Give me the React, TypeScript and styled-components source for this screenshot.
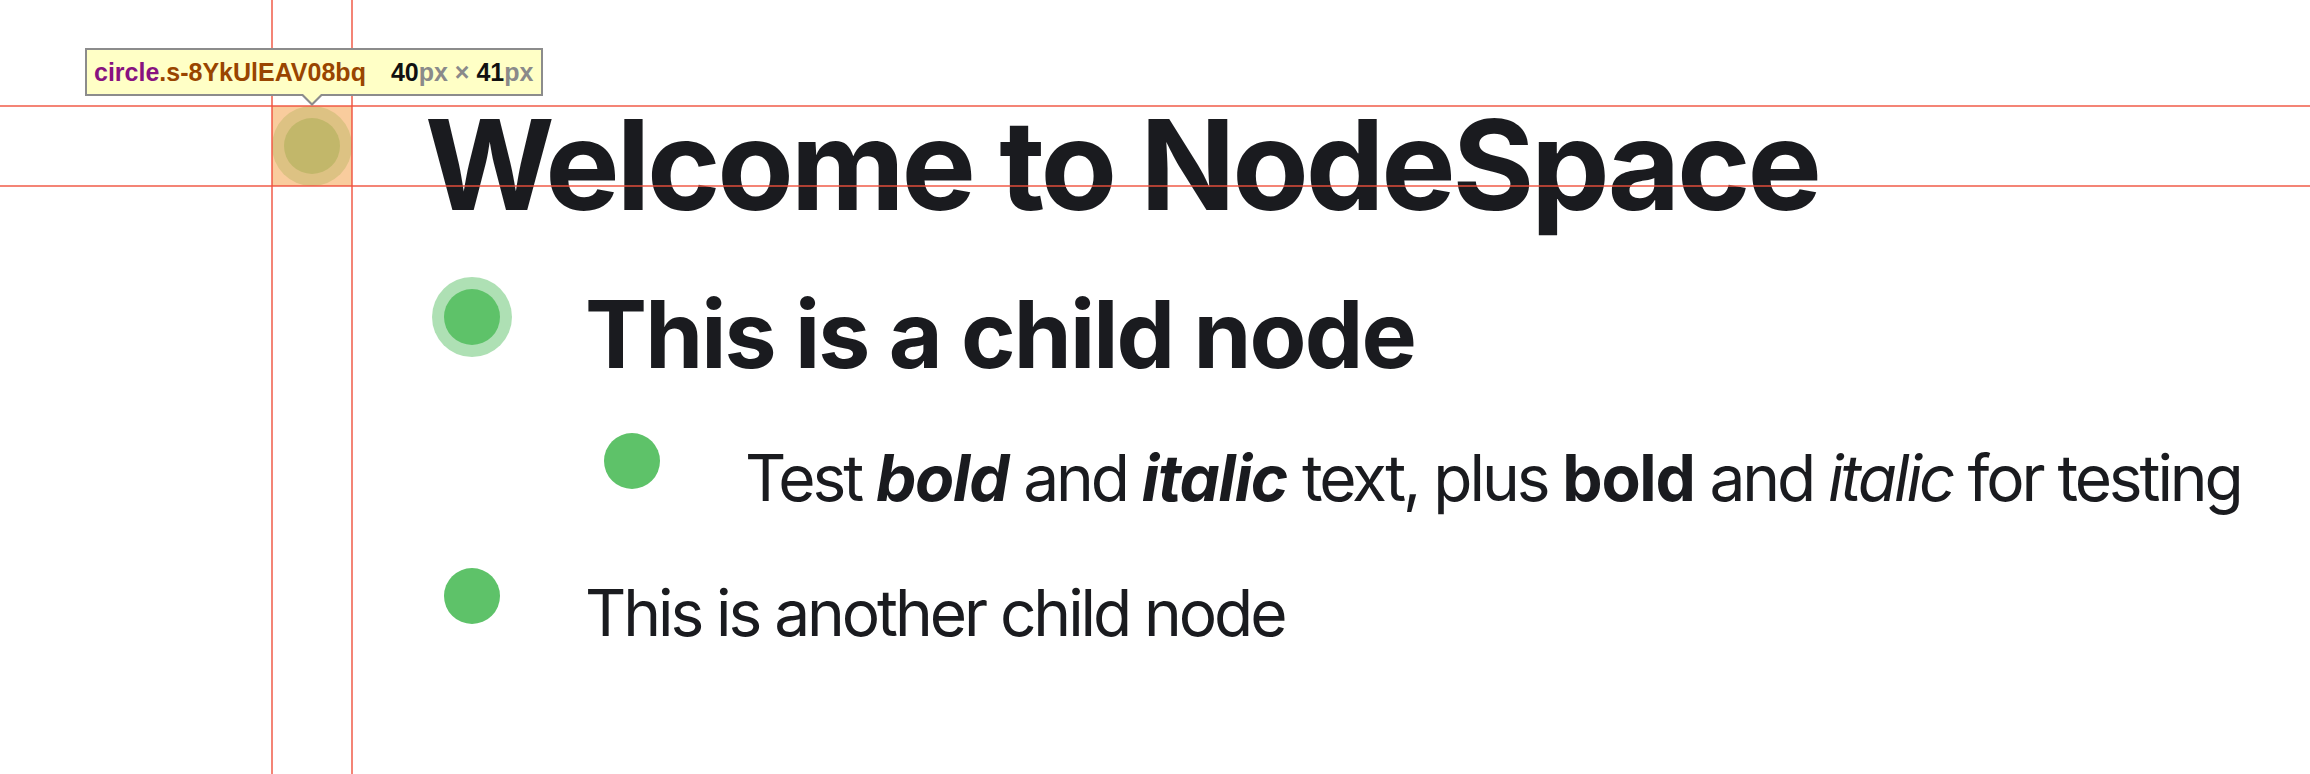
import React from "react";
import styled, { createGlobalStyle } from "styled-components";

const GlobalStyle = createGlobalStyle`
  html, body {
    margin: 0;
    padding: 0;
    background: #ffffff;
  }
  body {
    font-family: Inter, "Noto Sans", sans-serif;
    color: #1a1b1f;
  }
`;

const GREEN = "94, 194, 105";

type Variant = "heading" | "subheading" | "text";

const Page = styled.div`
  position: relative;
  width: 2310px;
  height: 774px;
  overflow: hidden;
  box-sizing: border-box;
  padding: 90px 0 0 272px;
`;

const NodeBlock = styled.div`
  display: flex;
  flex-direction: column;
  gap: 39px;
`;

const Children = styled.div`
  display: flex;
  flex-direction: column;
  gap: 39px;
  padding-left: 160px;
`;

const Row = styled.div`
  display: flex;
  align-items: flex-start;
  gap: 73px;
`;

const BulletSlot = styled.div<{ $offset: number }>`
  flex: 0 0 80px;
  height: 80px;
  margin-top: ${(p) => p.$offset}px;
  display: flex;
  align-items: center;
  justify-content: center;
`;

const Dot = styled.div<{ $ring: boolean }>`
  width: 56px;
  height: 56px;
  border-radius: 50%;
  background: rgb(${GREEN});
  box-shadow: ${(p) => (p.$ring ? `0 0 0 12px rgba(${GREEN}, 0.5)` : "none")};
`;

const Content = styled.div<{ $variant: Variant }>`
  white-space: nowrap;
  font-size: ${(p) =>
    p.$variant === "heading" ? "125px" : p.$variant === "subheading" ? "93px" : "64px"};
  font-weight: ${(p) => (p.$variant === "text" ? 400 : 700)};
  line-height: ${(p) => (p.$variant === "text" ? 1.5 : 1.2)};
  letter-spacing: ${(p) =>
    p.$variant === "heading" ? "-0.026em" : p.$variant === "subheading" ? "-0.02em" : "-0.048em"};

  strong {
    letter-spacing: -0.02em;
  }
`;

const offsets: Record<Variant, number> = {
  heading: 16,
  subheading: -2,
  text: -9,
};

type NodeProps = {
  variant: Variant;
  ring?: boolean;
  children?: React.ReactNode;
  label: React.ReactNode;
};

function TreeNode({ variant, ring = false, label, children }: NodeProps) {
  return (
    <NodeBlock>
      <Row>
        <BulletSlot $offset={offsets[variant]}>
          <Dot $ring={ring} />
        </BulletSlot>
        <Content $variant={variant}>{label}</Content>
      </Row>
      {children && <Children>{children}</Children>}
    </NodeBlock>
  );
}

/* devtools inspect overlay */

const GuideV = styled.div<{ $x: number }>`
  position: absolute;
  top: 0;
  bottom: 0;
  left: ${(p) => p.$x}px;
  width: 2px;
  background: rgba(240, 80, 60, 0.7);
`;

const GuideH = styled.div<{ $y: number }>`
  position: absolute;
  left: 0;
  right: 0;
  top: ${(p) => p.$y}px;
  height: 2px;
  background: rgba(240, 80, 60, 0.7);
`;

const Highlight = styled.div`
  position: absolute;
  left: 272px;
  top: 106px;
  width: 80px;
  height: 80px;
  background: rgba(246, 178, 107, 0.66);
`;

const Tooltip = styled.div`
  position: absolute;
  left: 85px;
  top: 48px;
  height: 48px;
  box-sizing: border-box;
  padding: 0 8px 0 7px;
  display: flex;
  align-items: center;
  gap: 25px;
  background: #ffffc6;
  border: 2px solid #8c8c8c;
  font-family: "Liberation Sans", Arial, sans-serif;
  font-size: 25px;
  font-weight: 700;
  white-space: nowrap;

  &::after {
    content: "";
    position: absolute;
    left: 213px;
    bottom: -12px;
    width: 0;
    height: 0;
    border-left: 12px solid transparent;
    border-right: 12px solid transparent;
    border-top: 12px solid #8c8c8c;
  }
  &::before {
    content: "";
    position: absolute;
    left: 215px;
    bottom: -9px;
    width: 0;
    height: 0;
    border-left: 10px solid transparent;
    border-right: 10px solid transparent;
    border-top: 10px solid #ffffc6;
    z-index: 1;
  }
`;

const TagName = styled.span`
  color: #881280;
`;

const ClassName = styled.span`
  color: #994500;
`;

const Num = styled.span`
  color: #111111;
`;

const Unit = styled.span`
  color: #8a8a8a;
`;

export default function App() {
  return (
    <>
      <GlobalStyle />
      <Page>
        <TreeNode variant="heading" ring label="Welcome to NodeSpace">
          <TreeNode variant="subheading" ring label="This is a child node">
            <TreeNode
              variant="text"
              label={
                <>
                  Test{" "}
                  <strong>
                    <em>bold</em>
                  </strong>{" "}
                  and{" "}
                  <strong>
                    <em>italic</em>
                  </strong>{" "}
                  text, plus <strong>bold</strong> and <em>italic</em> for testing
                </>
              }
            />
          </TreeNode>
          <TreeNode variant="text" label="This is another child node" />
        </TreeNode>

        <Highlight />
        <GuideV $x={271} />
        <GuideV $x={351} />
        <GuideH $y={105} />
        <GuideH $y={185} />
        <Tooltip>
          <span>
            <TagName>circle</TagName>
            <ClassName>.s-8YkUlEAV08bq</ClassName>
          </span>
          <span>
            <Num>40</Num>
            <Unit>px × </Unit>
            <Num>41</Num>
            <Unit>px</Unit>
          </span>
        </Tooltip>
      </Page>
    </>
  );
}
